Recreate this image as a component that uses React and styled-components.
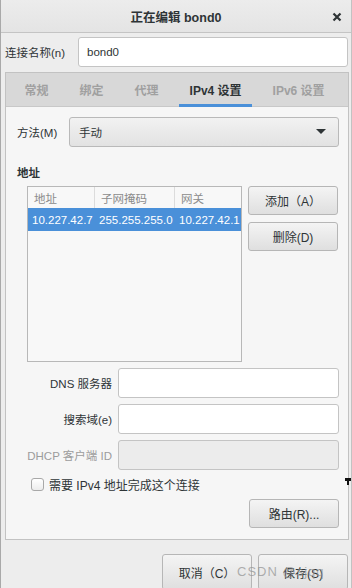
import styled, { createGlobalStyle } from 'styled-components'

const GlobalStyle = createGlobalStyle`
  html, body {
    margin: 0;
    padding: 0;
    background: #ededed;
  }
  body {
    font-family: "Liberation Sans", "Noto Sans CJK SC", sans-serif;
    font-size: 11.5px;
    color: #2e3436;
  }
`

const tabs = ['常规', '绑定', '代理', 'IPv4 设置', 'IPv6 设置']

const rows = [
  { label: 'DNS 服务器' },
  { label: '搜索域(e)' },
  { label: 'DHCP 客户端 ID', disabled: true },
]

function App() {
  return (
    <>
      <GlobalStyle />
      <Window>
        <TitleBar>
          <Title>正在编辑 bond0</Title>
          <Close>
            <svg width="10" height="10" viewBox="0 0 10 10">
              <path d="M1.5 1.5 L8.5 8.5 M8.5 1.5 L1.5 8.5" stroke="#2e3436" strokeWidth="2.2" />
            </svg>
          </Close>
        </TitleBar>

        <NameRow>
          <NameLabel>连接名称(n)</NameLabel>
          <Entry defaultValue="bond0" />
        </NameRow>

        <Notebook>
          <TabBar>
            {tabs.map((t, i) => (
              <Tab key={t} $active={i === 3}>{t}</Tab>
            ))}
          </TabBar>

          <Page>
            <MethodRow>
              <Label>方法(M)</Label>
              <Combo>
                <span>手动</span>
                <svg width="10" height="6" viewBox="0 0 10 6">
                  <path d="M0 0 L10 0 L5 5 Z" fill="#2e3436" />
                </svg>
              </Combo>
            </MethodRow>

            <Heading>地址</Heading>

            <AddressArea>
              <Tree>
                <HeaderRow>
                  <HeadCell>地址</HeadCell>
                  <HeadCell>子网掩码</HeadCell>
                  <HeadCell $last>网关</HeadCell>
                </HeaderRow>
                <DataRow $selected>
                  <Cell>10.227.42.7</Cell>
                  <Cell>255.255.255.0</Cell>
                  <Cell>10.227.42.1</Cell>
                </DataRow>
              </Tree>
              <ButtonColumn>
                <Button>添加（A）</Button>
                <Button>删除(D)</Button>
              </ButtonColumn>
            </AddressArea>

            <Form>
              {rows.map(r => (
                <FormRow key={r.label}>
                  <FormLabel $disabled={r.disabled}>{r.label}</FormLabel>
                  <Entry disabled={r.disabled} />
                </FormRow>
              ))}
            </Form>

            <CheckRow>
              <CheckBox />
              <span>需要 IPv4 地址完成这个连接</span>
            </CheckRow>

            <RouteRow>
              <Button>路由(R)...</Button>
            </RouteRow>
          </Page>
        </Notebook>

        <ActionBar>
          <Button $tall>取消（C）</Button>
          <Button $tall>保存(S)</Button>
          <Watermark>CSDN @sjqq</Watermark>
        </ActionBar>

        <Cursor />
      </Window>
    </>
  )
}

export default App

const Window = styled.div`
  position: relative;
  width: 352px;
  height: 588px;
  box-sizing: border-box;
  border-left: 1px solid #a9a9a9;
  border-right: 1px solid #c2c2c2;
  display: flex;
  flex-direction: column;
  overflow: hidden;
  background: #ededed;
`

const TitleBar = styled.div`
  height: 32px;
  flex-shrink: 0;
  display: flex;
  align-items: center;
  justify-content: center;
  position: relative;
  background: linear-gradient(#ececec, #e4e4e4);
  border-bottom: 1px solid #c4c4c4;
`

const Title = styled.div`
  font-weight: bold;
  font-size: 12.5px;
  color: #2e3436;
`

const Close = styled.div`
  position: absolute;
  right: 9px;
  top: 12px;
  display: flex;
`

const NameRow = styled.div`
  display: flex;
  align-items: center;
  padding: 4px 3px 0 4px;
  gap: 11px;
`

const NameLabel = styled.div`
  width: 62px;
  white-space: nowrap;
`

const Entry = styled.input`
  flex: 1;
  min-width: 0;
  height: 30px;
  box-sizing: border-box;
  border: 1px solid #c4c4c4;
  border-radius: 3px;
  background: ${p => (p.disabled ? '#ececec' : '#ffffff')};
  font: inherit;
  color: #2e3436;
  padding: 0 8px;
  outline: none;
`

const Notebook = styled.div`
  margin: 5px 2px 0 4px;
  border: 1px solid #c2c2c2;
  background: #f6f6f6;
  display: flex;
  flex-direction: column;
`

const TabBar = styled.div`
  display: flex;
  height: 33px;
  padding-left: 3px;
  background: #d8d8d8;
  border-bottom: 1px solid #c8c8c8;
`

const Tab = styled.div`
  position: relative;
  padding: 0 15.5px;
  display: flex;
  align-items: center;
  font-size: 12px;
  font-weight: bold;
  color: ${p => (p.$active ? '#2e3436' : '#a0a0a0')};
  white-space: nowrap;

  &::after {
    content: '';
    display: ${p => (p.$active ? 'block' : 'none')};
    position: absolute;
    left: 5px;
    right: 5px;
    bottom: -1px;
    height: 3px;
    background: #4a90d9;
  }
`

const Page = styled.div`
  padding: 10px 9px 11px 11px;
  display: flex;
  flex-direction: column;
`

const MethodRow = styled.div`
  display: flex;
  align-items: center;
  gap: 11px;
`

const Label = styled.div`
  width: 41px;
  white-space: nowrap;
`

const Combo = styled.div`
  flex: 1;
  height: 30px;
  box-sizing: border-box;
  border: 1px solid #b9b9b9;
  border-radius: 3px;
  background: linear-gradient(#f2f2f2, #e2e2e2);
  display: flex;
  align-items: center;
  justify-content: space-between;
  padding: 0 12px 0 9px;
`

const Heading = styled.div`
  font-weight: bold;
  margin: 18px 0 5px;
  line-height: 16px;
`

const AddressArea = styled.div`
  display: flex;
  gap: 6px;
  padding-left: 10px;
`

const Tree = styled.div`
  width: 215px;
  height: 176px;
  box-sizing: border-box;
  border: 1px solid #b8b8b8;
  background: #f8f8f8;
`

const gridCols = `
  display: grid;
  grid-template-columns: 67px 80px 1fr;
`

const HeaderRow = styled.div`
  ${gridCols}
  height: 21px;
`

const HeadCell = styled.div`
  display: flex;
  align-items: center;
  padding-left: 6px;
  color: #8b8b8b;
  border-right: ${p => (p.$last ? 'none' : '1px solid #dcdcdc')};
`

const DataRow = styled.div`
  ${gridCols}
  height: 23px;
  background: ${p => (p.$selected ? '#4a90d9' : 'transparent')};
  color: ${p => (p.$selected ? '#ffffff' : '#2e3436')};
`

const Cell = styled.div`
  display: flex;
  align-items: center;
  padding-left: 4px;
  white-space: nowrap;
  overflow: hidden;
`

const ButtonColumn = styled.div`
  width: 90px;
  display: flex;
  flex-direction: column;
  gap: 7px;
`

const Button = styled.button`
  width: 90px;
  height: ${p => (p.$tall ? '36px' : '29px')};
  box-sizing: border-box;
  border: 1px solid #b6b6b6;
  border-radius: 3px;
  background: linear-gradient(#f4f4f4, #dfdfdf);
  font: inherit;
  font-size: 12px;
  color: #2e3436;
  display: flex;
  align-items: ${p => (p.$tall ? 'flex-start' : 'center')};
  padding-top: ${p => (p.$tall ? '9px' : '0')};
  justify-content: center;
`

const Form = styled.div`
  display: flex;
  flex-direction: column;
  gap: 6px;
  margin-top: 6px;
`

const FormRow = styled.div`
  display: flex;
  align-items: center;
  gap: 6px;
`

const FormLabel = styled.div`
  width: 95px;
  text-align: right;
  white-space: nowrap;
  color: ${p => (p.$disabled ? '#9c9c9c' : '#2e3436')};
`

const CheckRow = styled.div`
  display: flex;
  align-items: center;
  gap: 5px;
  margin: 6px 0 0 14px;
  font-size: 12px;
`

const CheckBox = styled.span`
  width: 13px;
  height: 13px;
  box-sizing: border-box;
  border: 1px solid #a8a8a8;
  border-radius: 3px;
  background: linear-gradient(#ffffff, #ececec);
`

const RouteRow = styled.div`
  display: flex;
  justify-content: flex-end;
  margin-top: 6px;
`

const ActionBar = styled.div`
  position: relative;
  display: flex;
  justify-content: flex-end;
  gap: 6px;
  padding: 14px 3px 0 0;
`

const Watermark = styled.div`
  position: absolute;
  left: 236px;
  top: 24px;
  font-size: 13px;
  color: rgba(150, 150, 150, 0.75);
  letter-spacing: 1px;
  pointer-events: none;
`

const Cursor = styled.div`
  position: absolute;
  right: 0;
  top: 478px;
  width: 6px;
  height: 3px;
  background: #111;

  &::after {
    content: '';
    position: absolute;
    left: 2px;
    top: 3px;
    width: 2px;
    height: 4px;
    background: #111;
  }
`
